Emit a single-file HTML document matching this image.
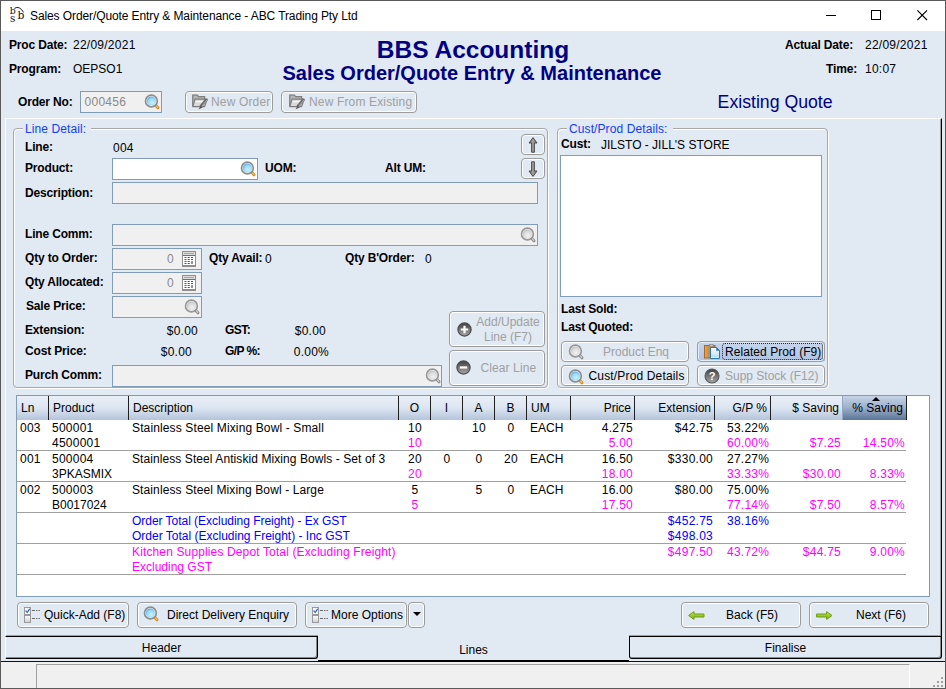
<!DOCTYPE html><html><head><meta charset="utf-8"><title>Sales Order/Quote Entry &amp; Maintenance - ABC Trading Pty Ltd</title><style>
*{box-sizing:border-box;margin:0;padding:0}
html,body{width:946px;height:689px;overflow:hidden;background:#E1E9F3}
body{font-family:"Liberation Sans",Arial,sans-serif;font-size:12px;line-height:14px;color:#000;position:relative}
.a{position:absolute;white-space:nowrap}
.b{font-weight:bold;letter-spacing:-0.17px}
.n{letter-spacing:0.25px}
.r{text-align:right}
.c{text-align:center}
.inp{position:absolute;border:1px solid #7F9DB9;background:#F0F0F0}
.w{background:#fff}
.btn{position:absolute;border:1px solid #9C9C9C;border-radius:4px;background:#E1E9F3;box-shadow:inset 0 0 0 1px #fff}
.dis{color:#A0A0A0}
.di{color:#8A8A8A;letter-spacing:0.25px}
.gb{position:absolute;border:1px solid #A8A8A8;border-radius:4px;box-shadow:inset 1px 1px 0 #fff, 1px 1px 0 #fff}
.lg{position:absolute;color:#1540EE;background:#E1E9F3;padding:0 5px 0 2px;white-space:nowrap;letter-spacing:0.1px}
.m{color:#FF00FF}
.bl{color:#0000FF}
.nv{color:#000080}
.hd{position:absolute;top:396px;height:24px;border-right:1px solid #202020;background:linear-gradient(#E9EFF7,#DCE5F1 50%,#B4C4DA);padding:5px 4px 0 4px;white-space:nowrap}
.hl{position:absolute;left:17px;width:889px;height:1px;background:#A0A0A0}
svg{position:absolute;overflow:visible}
</style></head><body>
<div class="a" style="left:0px;top:0px;width:946px;height:689px;border:1px solid #5A5A5A;"></div>
<div class="a" style="left:1px;top:1px;width:944px;height:30px;background:#fff;"></div>
<div class="a " style="left:30px;top:9px;font-size:12px;letter-spacing:-0.1px;">Sales Order/Quote Entry &amp; Maintenance - ABC Trading Pty Ltd</div>
<svg style="left:0;top:0" width="30" height="30" viewBox="0 0 30 30"><g font-family="DejaVu Serif, Liberation Serif, serif" fill="#111"><text x="9.8" y="14.3" font-size="9.4">b</text><text x="17.5" y="19" font-size="10.8">b</text><text x="9.9" y="21.7" font-size="10.4">s</text></g><path d="M14.3 8.4 Q19.5 5.2 23.6 12.4" stroke="#1A1A1A" fill="none" stroke-width="1"/></svg>
<svg style="left:820px;top:7px" width="120" height="16" viewBox="0 0 120 16"><path d="M6 8.5h10" stroke="#000" stroke-width="1" fill="none"/><rect x="51.5" y="3.5" width="9" height="9" stroke="#000" fill="none"/><path d="M97.4 3.4l9.6 9.6M107 3.4l-9.6 9.6" stroke="#000" stroke-width="1.1" fill="none"/></svg>
<div class="a b" style="left:9px;top:38px;">Proc Date:</div>
<div class="a n" style="left:73px;top:38px;">22/09/2021</div>
<div class="a b" style="left:9px;top:62px;">Program:</div>
<div class="a " style="left:73px;top:62px;">OEPSO1</div>
<div class="a b nv c" style="left:0px;top:36px;width:946px;font-size:24.5px;line-height:28px;letter-spacing:0;">BBS Accounting</div>
<div class="a b nv c" style="left:0px;top:62px;width:946px;font-size:20px;line-height:23px;left:-1px;letter-spacing:0;">Sales Order/Quote Entry &amp; Maintenance</div>
<div class="a b" style="left:785px;top:38px;">Actual Date:</div>
<div class="a n" style="left:865px;top:38px;">22/09/2021</div>
<div class="a r b" style="right:89px;top:62px;">Time:</div>
<div class="a n" style="left:865px;top:62px;">10:07</div>
<div class="a b" style="left:18px;top:95px;">Order No:</div>
<div class="inp" style="left:80px;top:91px;width:82px;height:22px;"></div>
<div class="a di" style="left:84.6px;top:95px;">000456</div>
<div class="a nv" style="left:717.6px;top:92px;font-size:17.7px;line-height:20px;">Existing Quote</div>
<svg width="0" height="0" style="left:0;top:0"><defs><radialGradient id="gl" cx="0.58" cy="0.68" r="0.75"><stop offset="0" stop-color="#C4F3FC"/><stop offset="0.6" stop-color="#98D8F8"/><stop offset="1" stop-color="#3C98EE"/></radialGradient><radialGradient id="gd" cx="0.58" cy="0.68" r="0.75"><stop offset="0" stop-color="#F2F2F2"/><stop offset="0.6" stop-color="#DADADA"/><stop offset="1" stop-color="#B4B4B4"/></radialGradient><linearGradient id="gb" x1="0" y1="0" x2="0" y2="1"><stop offset="0" stop-color="#FFFFFF"/><stop offset="1" stop-color="#CFCFCF"/></linearGradient><linearGradient id="gw" x1="0" y1="0" x2="1" y2="0"><stop offset="0" stop-color="#E2A860"/><stop offset="0.35" stop-color="#D08F42"/><stop offset="1" stop-color="#B87A30"/></linearGradient><linearGradient id="gp" x1="0" y1="0" x2="0" y2="1"><stop offset="0" stop-color="#FFFFFF"/><stop offset="0.6" stop-color="#D6ECF6"/><stop offset="0.8" stop-color="#B9DDEE"/><stop offset="1" stop-color="#FFFFFF"/></linearGradient><linearGradient id="gc" x1="0" y1="0" x2="0" y2="1"><stop offset="0" stop-color="#3E3E3E"/><stop offset="1" stop-color="#A8A8A8"/></linearGradient><linearGradient id="ga" x1="0" y1="0" x2="0" y2="1"><stop offset="0" stop-color="#C9E86A"/><stop offset="0.5" stop-color="#9CCB2A"/><stop offset="1" stop-color="#7FAE18"/></linearGradient><linearGradient id="gf" x1="0" y1="0" x2="1" y2="0"><stop offset="0" stop-color="#6A6A6A"/><stop offset="0.5" stop-color="#A4A4A4"/><stop offset="1" stop-color="#6A6A6A"/></linearGradient></defs></svg>
<svg style="left:144px;top:94px" width="17" height="17" viewBox="0 0 17 17"><path d="M11.8 11.4l2.2 2.4" stroke="#CF8F22" stroke-width="3" stroke-linecap="round"/><path d="M12.4 11.8l1.4 1.6" stroke="#F6C768" stroke-width="1.1" stroke-linecap="round"/><circle cx="7.4" cy="7" r="5.9" fill="#F8F8F8" stroke="#8E8E8E" stroke-width="1.7"/><circle cx="7.4" cy="7" r="4.6" fill="url(#gl)"/></svg>
<div class="btn" style="left:185px;top:91px;width:88px;height:22px;"></div>
<svg style="left:192px;top:94px" width="16" height="16" viewBox="0 0 16 16"><path d="M0.7 12.5V1.2H5.4L6.6 2.6H12.6V5.4" fill="#B4B4B4" stroke="#7E7E7E" stroke-width="1.2"/><path d="M0.8 12.6L3 5.2H15.2L12.6 12.6Z" fill="#DADADA" stroke="#7E7E7E" stroke-width="1.2" stroke-linejoin="round"/><path d="M3.6 7.6h7.4" stroke="#F6F6F6" stroke-width="1.2"/><path d="M14.8 5.2L8.4 13" stroke="#6A6A6A" stroke-width="2.8"/><path d="M15 6L9.2 13" stroke="#BDBDBD" stroke-width="0.9"/><path d="M8.8 11.6L6.4 15.4L10.6 13.6Z" fill="#585858"/></svg>
<div class="a dis" style="left:211px;top:95px;letter-spacing:0.15px">New Order</div>
<div class="btn" style="left:281px;top:91px;width:136px;height:22px;"></div>
<svg style="left:289px;top:94px" width="16" height="16" viewBox="0 0 16 16"><path d="M0.7 12.5V1.2H5.4L6.6 2.6H12.6V5.4" fill="#B4B4B4" stroke="#7E7E7E" stroke-width="1.2"/><path d="M0.8 12.6L3 5.2H15.2L12.6 12.6Z" fill="#DADADA" stroke="#7E7E7E" stroke-width="1.2" stroke-linejoin="round"/><path d="M3.6 7.6h7.4" stroke="#F6F6F6" stroke-width="1.2"/><path d="M14.8 5.2L8.4 13" stroke="#6A6A6A" stroke-width="2.8"/><path d="M15 6L9.2 13" stroke="#BDBDBD" stroke-width="0.9"/><path d="M8.8 11.6L6.4 15.4L10.6 13.6Z" fill="#585858"/></svg>
<div class="a dis" style="left:309px;top:95px;letter-spacing:0.15px">New From Existing</div>
<div class="a" style="left:5px;top:118px;width:937px;height:519px;border-top:1px solid #fff;border-left:1px solid #fff;border-right:1px solid #000;border-bottom:1px solid #000;"></div>
<div class="a" style="left:6px;top:119px;width:935px;height:517px;border-right:1px solid #A0A0A0;border-bottom:1px solid #A0A0A0;"></div>
<div class="gb" style="left:13px;top:128px;width:535px;height:260px;"></div>
<div class="lg" style="left:23px;top:122px">Line Detail:</div>
<div class="a b" style="left:25px;top:140px;">Line:</div>
<div class="a n" style="left:113px;top:141px;">004</div>
<div class="a b" style="left:25px;top:161px;">Product:</div>
<div class="inp w" style="left:112px;top:158px;width:146px;height:22px;"></div>
<svg style="left:240.1px;top:160.8px" width="17" height="17" viewBox="0 0 17 17"><path d="M11.8 11.4l2.2 2.4" stroke="#CF8F22" stroke-width="3" stroke-linecap="round"/><path d="M12.4 11.8l1.4 1.6" stroke="#F6C768" stroke-width="1.1" stroke-linecap="round"/><circle cx="7.4" cy="7" r="5.9" fill="#F8F8F8" stroke="#8E8E8E" stroke-width="1.7"/><circle cx="7.4" cy="7" r="4.6" fill="url(#gl)"/></svg>
<div class="a b" style="left:265px;top:161px;">UOM:</div>
<div class="a b" style="left:385px;top:161px;">Alt UM:</div>
<div class="a b" style="left:25px;top:186px;">Description:</div>
<div class="inp" style="left:112px;top:182px;width:426px;height:22px;"></div>
<div class="a b" style="left:25px;top:227px;">Line Comm:</div>
<div class="inp" style="left:112px;top:224px;width:426px;height:22px;"></div>
<svg style="left:520.4px;top:227.3px" width="17" height="17" viewBox="0 0 17 17"><path d="M11.8 11.4l2.2 2.4" stroke="#8E8E8E" stroke-width="3" stroke-linecap="round"/><path d="M12.4 11.8l1.4 1.6" stroke="#D8D8D8" stroke-width="1.1" stroke-linecap="round"/><circle cx="7.4" cy="7" r="5.9" fill="#F8F8F8" stroke="#989898" stroke-width="1.7"/><circle cx="7.4" cy="7" r="4.6" fill="url(#gd)"/></svg>
<div class="a b" style="left:25px;top:251px;">Qty to Order:</div>
<div class="inp" style="left:112px;top:248px;width:90px;height:22px;"></div>
<div class="a r di" style="right:772px;top:252px;">0</div>
<div class="a b" style="left:209px;top:251px;">Qty Avail:</div>
<div class="a " style="left:265px;top:252px;">0</div>
<div class="a b" style="left:345px;top:251px;">Qty B'Order:</div>
<div class="a " style="left:425px;top:252px;">0</div>
<div class="a b" style="left:25px;top:275px;">Qty Allocated:</div>
<div class="inp" style="left:112px;top:272px;width:90px;height:22px;"></div>
<div class="a r di" style="right:772px;top:276px;">0</div>
<div class="a b" style="left:26px;top:299px;">Sale Price:</div>
<div class="inp" style="left:112px;top:296px;width:90px;height:22px;"></div>
<svg style="left:184.2px;top:299.2px" width="17" height="17" viewBox="0 0 17 17"><path d="M11.8 11.4l2.2 2.4" stroke="#8E8E8E" stroke-width="3" stroke-linecap="round"/><path d="M12.4 11.8l1.4 1.6" stroke="#D8D8D8" stroke-width="1.1" stroke-linecap="round"/><circle cx="7.4" cy="7" r="5.9" fill="#F8F8F8" stroke="#989898" stroke-width="1.7"/><circle cx="7.4" cy="7" r="4.6" fill="url(#gd)"/></svg>
<div class="a b" style="left:25px;top:323px;">Extension:</div>
<div class="a r n" style="right:748px;top:324px;">$0.00</div>
<div class="a b" style="left:225px;top:323px;letter-spacing:-0.55px">GST:</div>
<div class="a r n" style="right:620px;top:324px;">$0.00</div>
<div class="a b" style="left:25px;top:344px;">Cost Price:</div>
<div class="a r n" style="right:754px;top:345px;">$0.00</div>
<div class="a b" style="left:225px;top:344px;letter-spacing:-0.6px">G/P %:</div>
<div class="a r n" style="right:617px;top:345px;">0.00%</div>
<div class="a b" style="left:25px;top:368px;">Purch Comm:</div>
<div class="inp" style="left:112px;top:365px;width:330px;height:22px;"></div>
<svg style="left:424.5px;top:368.3px" width="17" height="17" viewBox="0 0 17 17"><path d="M11.8 11.4l2.2 2.4" stroke="#8E8E8E" stroke-width="3" stroke-linecap="round"/><path d="M12.4 11.8l1.4 1.6" stroke="#D8D8D8" stroke-width="1.1" stroke-linecap="round"/><circle cx="7.4" cy="7" r="5.9" fill="#F8F8F8" stroke="#989898" stroke-width="1.7"/><circle cx="7.4" cy="7" r="4.6" fill="url(#gd)"/></svg>
<svg style="left:182px;top:251px" width="14" height="16" viewBox="0 0 14 16"><rect x="0.5" y="0.5" width="13" height="15" fill="#fff" stroke="#8E8E8E"/><rect x="1" y="1" width="12" height="3" fill="#DCDCDC"/><rect x="2" y="2" width="10" height="1" fill="#A6A6A6"/><rect x="1" y="4" width="12" height="1" fill="#707070"/><rect x="1" y="14" width="12" height="1" fill="#8E8E8E"/><g fill="#555"><rect x="2.5" y="6" width="2" height="1"/><rect x="5.7" y="6" width="2" height="1"/><rect x="9" y="6" width="2" height="1"/><rect x="2.5" y="8" width="2" height="1"/><rect x="5.7" y="8" width="2" height="1"/><rect x="9" y="8" width="2" height="1"/><rect x="2.5" y="10" width="2" height="1"/><rect x="5.7" y="10" width="2" height="1"/><rect x="2.5" y="12" width="2" height="1"/><rect x="5.7" y="12" width="2" height="1"/></g><rect x="9.2" y="10" width="1.6" height="3" fill="#7A7A7A"/></svg>
<svg style="left:182px;top:275px" width="14" height="16" viewBox="0 0 14 16"><rect x="0.5" y="0.5" width="13" height="15" fill="#fff" stroke="#8E8E8E"/><rect x="1" y="1" width="12" height="3" fill="#DCDCDC"/><rect x="2" y="2" width="10" height="1" fill="#A6A6A6"/><rect x="1" y="4" width="12" height="1" fill="#707070"/><rect x="1" y="14" width="12" height="1" fill="#8E8E8E"/><g fill="#555"><rect x="2.5" y="6" width="2" height="1"/><rect x="5.7" y="6" width="2" height="1"/><rect x="9" y="6" width="2" height="1"/><rect x="2.5" y="8" width="2" height="1"/><rect x="5.7" y="8" width="2" height="1"/><rect x="9" y="8" width="2" height="1"/><rect x="2.5" y="10" width="2" height="1"/><rect x="5.7" y="10" width="2" height="1"/><rect x="2.5" y="12" width="2" height="1"/><rect x="5.7" y="12" width="2" height="1"/></g><rect x="9.2" y="10" width="1.6" height="3" fill="#7A7A7A"/></svg>
<div class="btn" style="left:521px;top:134px;width:24px;height:21px;"></div>
<div class="btn" style="left:521px;top:158px;width:24px;height:21px;"></div>
<svg style="left:527px;top:136.6px" width="12" height="16" viewBox="0 0 12 16"><path d="M6 0.6 L2 6 H4.6 V15.2 H7.4 V6 H10 Z" fill="url(#gf)" stroke="#4A4A4A" stroke-width="1" stroke-linejoin="round"/></svg>
<svg style="left:527px;top:161px" width="12" height="16" viewBox="0 0 12 16"><path d="M6 15.4 L2 10 H4.6 V0.8 H7.4 V10 H10 Z" fill="url(#gf)" stroke="#4A4A4A" stroke-width="1" stroke-linejoin="round"/></svg>
<div class="btn" style="left:449px;top:311px;width:96px;height:36px;"></div>
<div class="a dis c" style="left:472px;top:315px;line-height:15px;width:72px;">Add/Update<br>Line (F7)</div>
<div class="btn" style="left:449px;top:350px;width:96px;height:36px;"></div>
<div class="a dis" style="left:480.5px;top:361px;letter-spacing:0.1px">Clear Line</div>
<svg style="left:456.6px;top:322px" width="15" height="15" viewBox="0 0 15 15"><circle cx="7.5" cy="7.5" r="6.6" fill="url(#gc)" stroke="#4A4A4A" stroke-width="1.2"/><path d="M3.8 7.5h7.4M7.5 3.8v7.4" stroke="#fff" stroke-width="2.2"/></svg>
<svg style="left:456px;top:360px" width="15" height="15" viewBox="0 0 15 15"><circle cx="7.5" cy="7.5" r="6.6" fill="url(#gc)" stroke="#4A4A4A" stroke-width="1.2"/><path d="M3.8 7.5h7.4" stroke="#fff" stroke-width="2.2"/></svg>
<div class="gb" style="left:557px;top:128px;width:271px;height:260px;"></div>
<div class="lg" style="left:567px;top:122px">Cust/Prod Details:</div>
<div class="a b" style="left:561px;top:137px;">Cust:</div>
<div class="a " style="left:601px;top:138px;">JILSTO - JILL'S STORE</div>
<div class="inp w" style="left:560px;top:155px;width:262px;height:142px;"></div>
<div class="a b" style="left:561px;top:302px;">Last Sold:</div>
<div class="a b" style="left:561px;top:320px;">Last Quoted:</div>
<div class="btn" style="left:561px;top:341px;width:128px;height:21px;"></div>
<svg style="left:567.5px;top:343.8px" width="17" height="17" viewBox="0 0 17 17"><path d="M11.8 11.4l2.2 2.4" stroke="#8E8E8E" stroke-width="3" stroke-linecap="round"/><path d="M12.4 11.8l1.4 1.6" stroke="#D8D8D8" stroke-width="1.1" stroke-linecap="round"/><circle cx="7.4" cy="7" r="5.9" fill="#F8F8F8" stroke="#989898" stroke-width="1.7"/><circle cx="7.4" cy="7" r="4.6" fill="url(#gd)"/></svg>
<div class="a dis" style="left:603px;top:345px;">Product Enq</div>
<div class="a" style="left:697px;top:342px;width:128px;height:19px;background:linear-gradient(#C6D6EE,#AFC3E3);"></div>
<div class="btn" style="left:697px;top:341px;width:128px;height:21px;background:linear-gradient(#C6D6EE,#AFC3E3);box-shadow:inset 0 0 0 1px #E4ECF8;"></div>
<div class="a " style="left:725px;top:345px;letter-spacing:0.06px">Related Prod (F9)</div>
<div class="a" style="left:722px;top:343px;width:101px;height:17px;border:1px dotted #222;border-radius:3px;"></div>
<div class="btn" style="left:561px;top:365px;width:128px;height:21px;"></div>
<svg style="left:567.6px;top:368.9px" width="17" height="17" viewBox="0 0 17 17"><path d="M11.8 11.4l2.2 2.4" stroke="#CF8F22" stroke-width="3" stroke-linecap="round"/><path d="M12.4 11.8l1.4 1.6" stroke="#F6C768" stroke-width="1.1" stroke-linecap="round"/><circle cx="7.4" cy="7" r="5.9" fill="#F8F8F8" stroke="#8E8E8E" stroke-width="1.7"/><circle cx="7.4" cy="7" r="4.6" fill="url(#gl)"/></svg>
<div class="a " style="left:588.5px;top:369px;letter-spacing:0.16px">Cust/Prod Details</div>
<div class="btn" style="left:697px;top:365px;width:128px;height:21px;"></div>
<div class="a dis" style="left:725px;top:369px;">Supp Stock (F12)</div>
<svg style="left:703.5px;top:367.5px" width="16" height="16" viewBox="0 0 16 16"><circle cx="8" cy="8" r="7" fill="url(#gc)" stroke="#585858" stroke-width="1.1"/><text x="8" y="12" font-size="11" font-weight="bold" fill="#fff" text-anchor="middle" font-family="Liberation Sans">?</text></svg>
<svg style="left:703px;top:344px" width="18" height="16" viewBox="0 0 18 16"><rect x="1.5" y="1.5" width="10.5" height="12.5" fill="url(#gw)" stroke="#A86A24"/><rect x="6.5" y="0.5" width="3.6" height="2" fill="#C8C8C8" stroke="#8A8A8A" stroke-width="0.7"/><path d="M7.5 3.5h6l3 3v8h-9z" fill="url(#gp)" stroke="#2878B4"/><path d="M13.5 3.5v3h3z" fill="#2878B4" stroke="#2878B4" stroke-width="0.6"/></svg>
<div class="a" style="left:16px;top:395px;width:914px;height:202px;border:1px solid #7F9DB9;background:#fff;"></div>
<div class="hd" style="left:17px;width:32px;">Ln</div>
<div class="hd" style="left:49px;width:80px;">Product</div>
<div class="hd" style="left:129px;width:270px;">Description</div>
<div class="hd" style="left:399px;width:32px;text-align:center;">O</div>
<div class="hd" style="left:431px;width:32px;text-align:center;">I</div>
<div class="hd" style="left:463px;width:32px;text-align:center;">A</div>
<div class="hd" style="left:495px;width:32px;text-align:center;">B</div>
<div class="hd" style="left:527px;width:44px;">UM</div>
<div class="hd" style="left:571px;width:64px;text-align:right;padding-right:3px;">Price</div>
<div class="hd" style="left:635px;width:80px;text-align:right;padding-right:3px;">Extension</div>
<div class="hd" style="left:715px;width:56px;text-align:right;padding-right:3px;">G/P %</div>
<div class="hd" style="left:771px;width:72px;text-align:right;padding-right:3px;border-right-color:#93A7C2;">$ Saving</div>
<div class="hd" style="left:843px;width:64px;text-align:right;padding-right:3px;background:linear-gradient(#C4D2E4,#9FB3CE 45%,#5C7597);">% Saving</div>
<svg style="left:871.5px;top:397px" width="8" height="4" viewBox="0 0 8 4"><path d="M0 4L4 0L8 4z" fill="#000"/></svg>
<div class="hl" style="top:450px"></div>
<div class="hl" style="top:481px"></div>
<div class="hl" style="top:512px"></div>
<div class="hl" style="top:543px"></div>
<div class="hl" style="top:574px"></div>
<div class="a  n" style="left:20px;top:421px;">003</div>
<div class="a  n" style="left:52px;top:421px;">500001</div>
<div class="a " style="left:132px;top:421px;letter-spacing:0.13px">Stainless Steel Mixing Bowl - Small</div>
<div class="a  n c" style="left:395px;top:421px;width:40px;">10</div>
<div class="a  n c" style="left:459px;top:421px;width:40px;">10</div>
<div class="a  n c" style="left:491px;top:421px;width:40px;">0</div>
<div class="a " style="left:530px;top:421px;">EACH</div>
<div class="a r  n" style="right:313px;top:421px;">4.275</div>
<div class="a r  n" style="right:233px;top:421px;">$42.75</div>
<div class="a  n" style="left:727px;top:421px;">53.22%</div>
<div class="a  n" style="left:52px;top:436px;">4500001</div>
<div class="a m n c" style="left:395px;top:436px;width:40px;">10</div>
<div class="a r m n" style="right:313px;top:436px;">5.00</div>
<div class="a m n" style="left:727px;top:436px;">60.00%</div>
<div class="a r m n" style="right:105px;top:436px;">$7.25</div>
<div class="a r m n" style="right:41px;top:436px;">14.50%</div>
<div class="a  n" style="left:20px;top:452px;">001</div>
<div class="a  n" style="left:52px;top:452px;">500004</div>
<div class="a " style="left:132px;top:452px;letter-spacing:0.08px">Stainless Steel Antiskid Mixing Bowls - Set of 3</div>
<div class="a  n c" style="left:395px;top:452px;width:40px;">20</div>
<div class="a  n c" style="left:427px;top:452px;width:40px;">0</div>
<div class="a  n c" style="left:459px;top:452px;width:40px;">0</div>
<div class="a  n c" style="left:491px;top:452px;width:40px;">20</div>
<div class="a " style="left:530px;top:452px;">EACH</div>
<div class="a r  n" style="right:313px;top:452px;">16.50</div>
<div class="a r  n" style="right:233px;top:452px;">$330.00</div>
<div class="a  n" style="left:727px;top:452px;">27.27%</div>
<div class="a " style="left:52px;top:467px;">3PKASMIX</div>
<div class="a m n c" style="left:395px;top:467px;width:40px;">20</div>
<div class="a r m n" style="right:313px;top:467px;">18.00</div>
<div class="a m n" style="left:727px;top:467px;">33.33%</div>
<div class="a r m n" style="right:105px;top:467px;">$30.00</div>
<div class="a r m n" style="right:41px;top:467px;">8.33%</div>
<div class="a  n" style="left:20px;top:483px;">002</div>
<div class="a  n" style="left:52px;top:483px;">500003</div>
<div class="a " style="left:132px;top:483px;letter-spacing:0.11px">Stainless Steel Mixing Bowl - Large</div>
<div class="a  n c" style="left:395px;top:483px;width:40px;">5</div>
<div class="a  n c" style="left:459px;top:483px;width:40px;">5</div>
<div class="a  n c" style="left:491px;top:483px;width:40px;">0</div>
<div class="a " style="left:530px;top:483px;">EACH</div>
<div class="a r  n" style="right:313px;top:483px;">16.00</div>
<div class="a r  n" style="right:233px;top:483px;">$80.00</div>
<div class="a  n" style="left:727px;top:483px;">75.00%</div>
<div class="a " style="left:52px;top:498px;">B0017024</div>
<div class="a m n c" style="left:395px;top:498px;width:40px;">5</div>
<div class="a r m n" style="right:313px;top:498px;">17.50</div>
<div class="a m n" style="left:727px;top:498px;">77.14%</div>
<div class="a r m n" style="right:105px;top:498px;">$7.50</div>
<div class="a r m n" style="right:41px;top:498px;">8.57%</div>
<div class="a bl" style="left:132px;top:514px;letter-spacing:-0.03px">Order Total (Excluding Freight) - Ex GST</div>
<div class="a r bl n" style="right:233px;top:514px;">$452.75</div>
<div class="a bl n" style="left:727px;top:514px;">38.16%</div>
<div class="a bl" style="left:132px;top:529px;">Order Total (Excluding Freight) - Inc GST</div>
<div class="a r bl n" style="right:233px;top:529px;">$498.03</div>
<div class="a m" style="left:132px;top:545px;letter-spacing:0.134px">Kitchen Supplies Depot Total (Excluding Freight)</div>
<div class="a r m n" style="right:233px;top:545px;">$497.50</div>
<div class="a m n" style="left:727px;top:545px;">43.72%</div>
<div class="a r m n" style="right:105px;top:545px;">$44.75</div>
<div class="a r m n" style="right:41px;top:545px;">9.00%</div>
<div class="a m" style="left:132px;top:560px;">Excluding GST</div>
<div class="btn" style="left:17px;top:602px;width:112px;height:26px;"></div>
<div class="a " style="left:44px;top:608px;">Quick-Add (F8)</div>
<div class="btn" style="left:137px;top:602px;width:160px;height:26px;"></div>
<svg style="left:143.4px;top:606px" width="17" height="17" viewBox="0 0 17 17"><path d="M11.8 11.4l2.2 2.4" stroke="#CF8F22" stroke-width="3" stroke-linecap="round"/><path d="M12.4 11.8l1.4 1.6" stroke="#F6C768" stroke-width="1.1" stroke-linecap="round"/><circle cx="7.4" cy="7" r="5.9" fill="#F8F8F8" stroke="#8E8E8E" stroke-width="1.7"/><circle cx="7.4" cy="7" r="4.6" fill="url(#gl)"/></svg>
<div class="a " style="left:167px;top:608px;">Direct Delivery Enquiry</div>
<div class="btn" style="left:305px;top:602px;width:102px;height:26px;"></div>
<div class="a " style="left:331px;top:608px;">More Options</div>
<div class="btn" style="left:408px;top:602px;width:17px;height:26px;"></div>
<svg style="left:412.5px;top:612px" width="8" height="4" viewBox="0 0 8 4"><path d="M0 0h8L4 4z" fill="#000"/></svg>
<svg style="left:24px;top:607px" width="17" height="16" viewBox="0 0 17 16"><rect x="0.5" y="0.5" width="6" height="7" fill="#F4F6FA" stroke="#9A9A9A"/><rect x="0.5" y="8.5" width="6" height="7" fill="url(#gb)" stroke="#9A9A9A"/><path d="M8 3.5h3M12 3.5h1.5M14.5 3.5h1.5M8 11.5h3M12 11.5h1.5M14.5 11.5h1.5" stroke="#6A6A6A" stroke-width="1.2"/><path d="M1.6 3.6l1.6 1.8l2.6-3.6" stroke="#2A62C8" stroke-width="1.2" fill="none"/></svg>
<svg style="left:312px;top:607px" width="17" height="16" viewBox="0 0 17 16"><rect x="0.5" y="0.5" width="6" height="7" fill="#F4F6FA" stroke="#9A9A9A"/><rect x="0.5" y="8.5" width="6" height="7" fill="url(#gb)" stroke="#9A9A9A"/><path d="M8 3.5h3M12 3.5h1.5M14.5 3.5h1.5M8 11.5h3M12 11.5h1.5M14.5 11.5h1.5" stroke="#6A6A6A" stroke-width="1.2"/><path d="M1.6 3.6l1.6 1.8l2.6-3.6" stroke="#2A62C8" stroke-width="1.2" fill="none"/></svg>
<div class="btn" style="left:681px;top:602px;width:120px;height:26px;"></div>
<div class="a " style="left:726px;top:608px;">Back (F5)</div>
<div class="btn" style="left:809px;top:602px;width:120px;height:26px;"></div>
<div class="a " style="left:856px;top:608px;">Next (F6)</div>
<svg style="left:688px;top:610.5px" width="17" height="9" viewBox="0 0 17 9"><path d="M0.6 4.5L6 0.6V3H16V6H6V8.4Z" fill="url(#ga)" stroke="#6E9C14" stroke-width="1" stroke-linejoin="round"/></svg>
<svg style="left:816px;top:610.5px" width="17" height="9" viewBox="0 0 17 9"><path d="M16 4.5L10.6 0.6V3H0.6V6H10.6V8.4Z" fill="url(#ga)" stroke="#6E9C14" stroke-width="1" stroke-linejoin="round"/></svg>
<div class="a" style="left:5px;top:637px;width:313px;height:22px;border-left:1px solid #fff;border-right:1px solid #000;border-bottom:1px solid #000;border-radius:0 0 3px 0;box-shadow:inset -1px -1px 0 #8A8A8A;"></div>
<div class="a c" style="left:5px;top:641px;width:313px;">Header</div>
<div class="a" style="left:318px;top:635px;width:311px;height:27px;background:#E1E9F3;"></div>
<div class="a c" style="left:318px;top:643px;width:311px;">Lines</div>
<div class="a" style="left:629px;top:637px;width:313px;height:22px;border-left:1px solid #000;border-right:1px solid #000;border-bottom:1px solid #000;border-radius:0 0 3px 3px;box-shadow:inset -1px -1px 0 #8A8A8A;"></div>
<div class="a c" style="left:629px;top:641px;width:313px;">Finalise</div>
<div class="a" style="left:1px;top:661px;width:944px;height:1px;background:#101010;"></div>
<div class="a" style="left:318px;top:660px;width:311px;height:2px;background:#000;"></div>
<div class="a" style="left:1px;top:662px;width:944px;height:26px;background:#F0F0F0;"></div>
<div class="a" style="left:36px;top:664px;width:874px;height:24px;border-left:1px solid #A0A0A0;border-top:1px solid #A0A0A0;border-right:1px solid #fff;"></div>
<svg style="left:932px;top:676px" width="12" height="12" viewBox="0 0 12 12"><g fill="#A0A0A0"><rect x="9" y="1" width="2" height="2"/><rect x="5" y="5" width="2" height="2"/><rect x="9" y="5" width="2" height="2"/><rect x="1" y="9" width="2" height="2"/><rect x="5" y="9" width="2" height="2"/><rect x="9" y="9" width="2" height="2"/></g></svg>
</body></html>
